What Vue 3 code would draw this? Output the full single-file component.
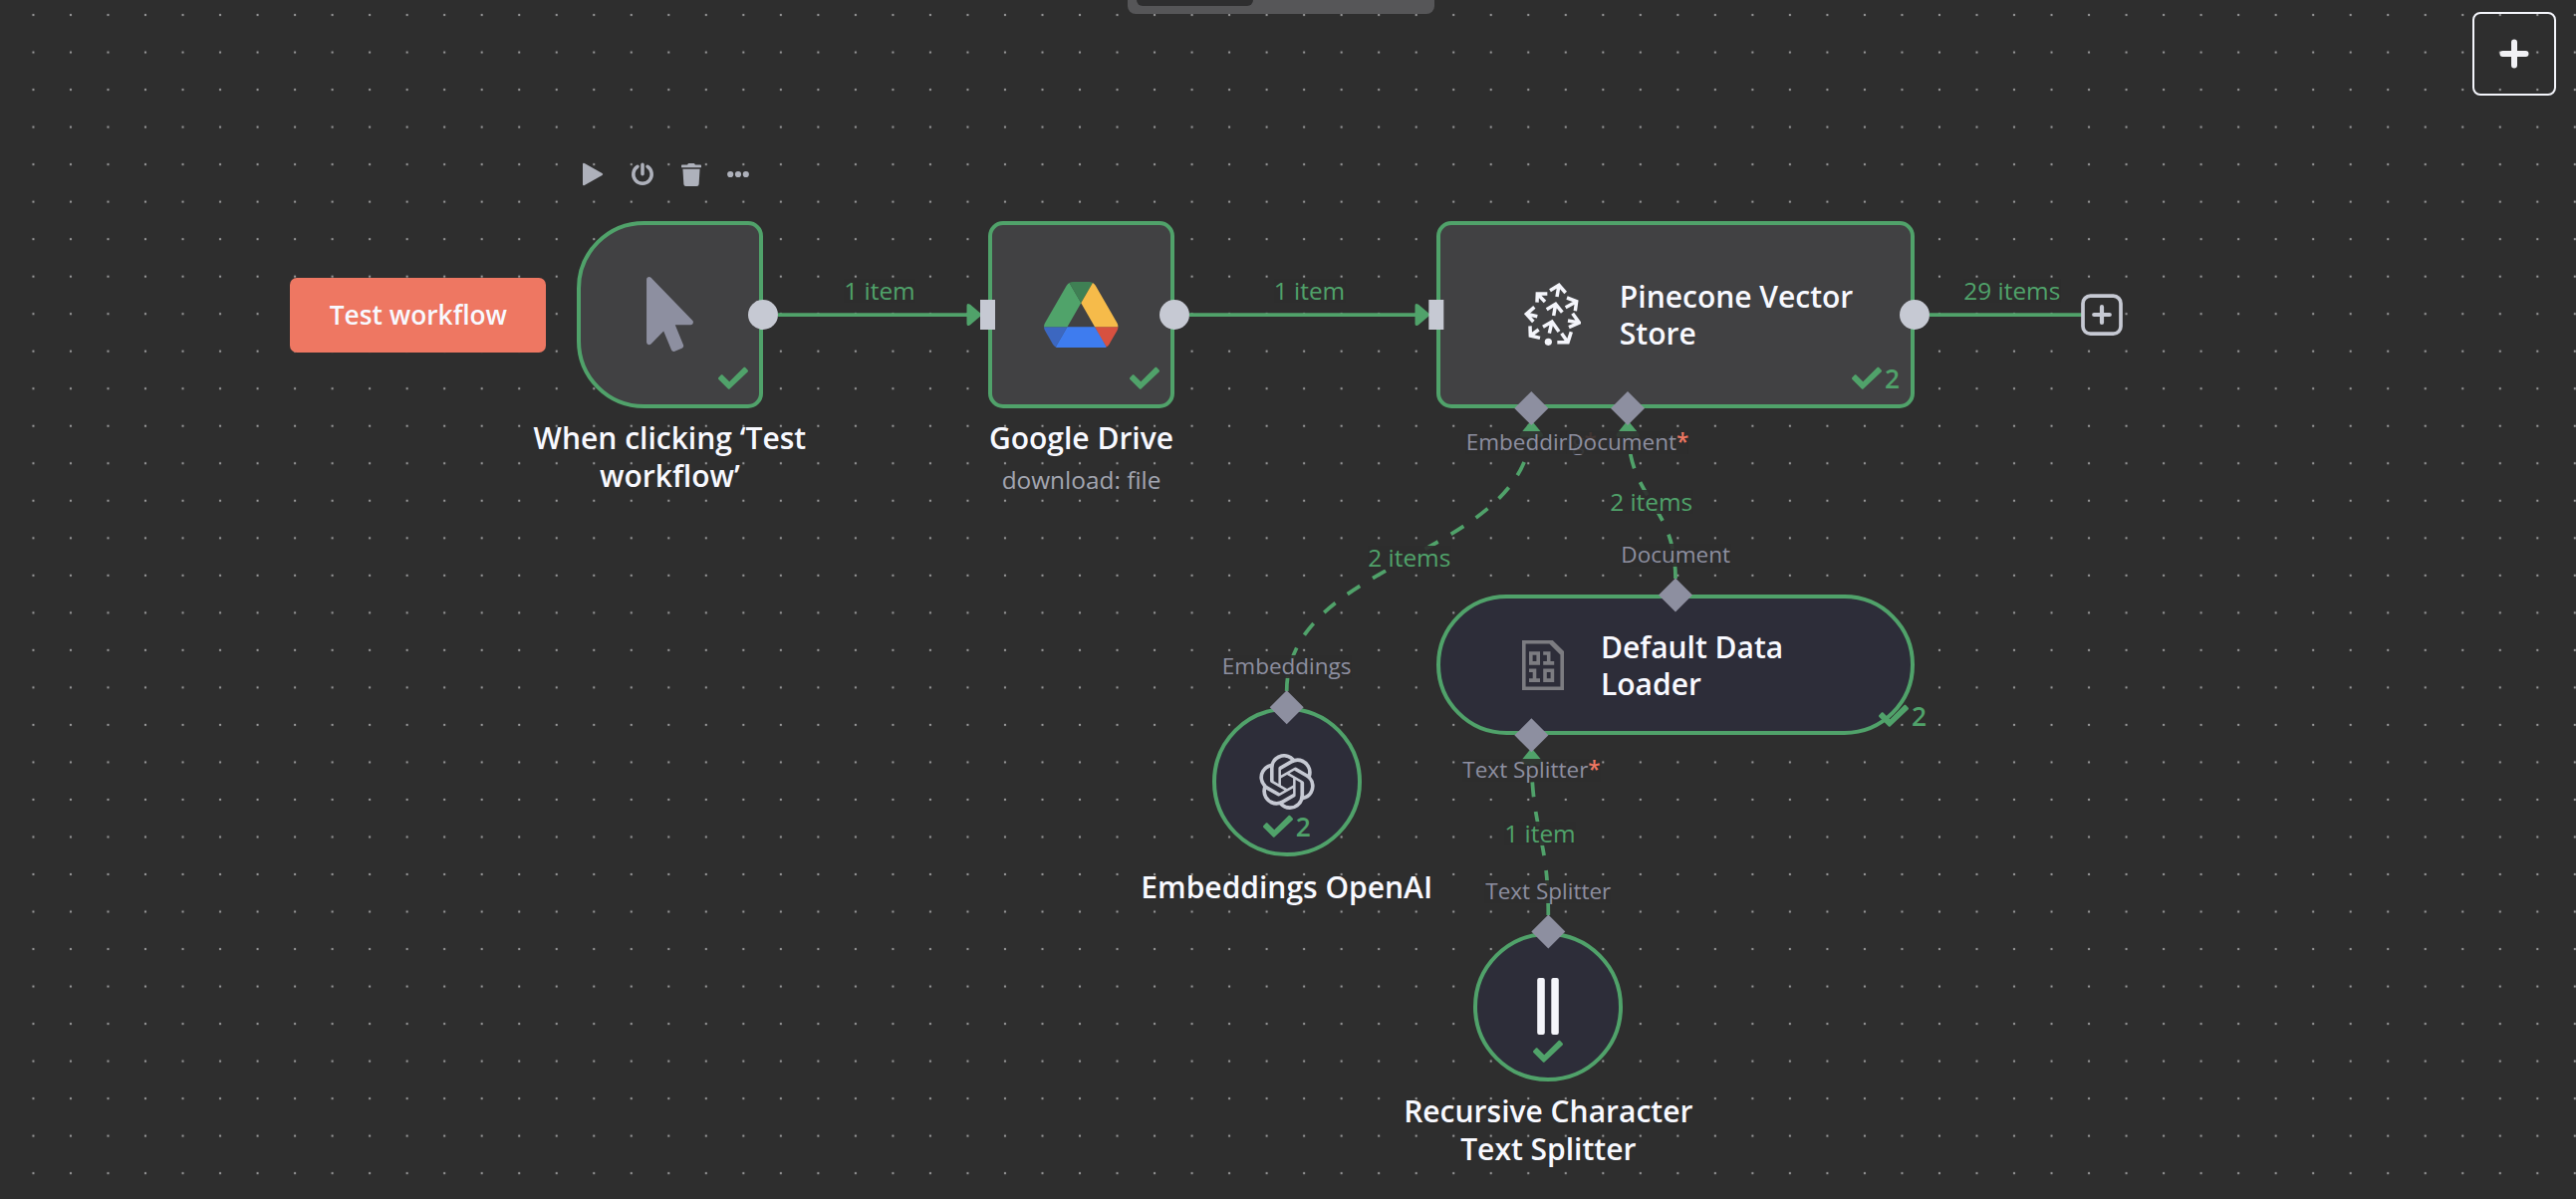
<script setup>
const CHECK =
  'M173.898 439.404l-166.4-166.4c-9.997-9.997-9.997-26.206 0-36.204l36.203-36.204c9.997-9.998 26.207-9.998 36.204 0L192 312.69 432.095 72.596c9.997-9.997 26.207-9.997 36.204 0l36.203 36.204c9.997 9.997 9.997 26.206 0 36.204L192 439.404z'

const nodes = [
  { id: 'trigger', kind: 'trigger', x: 578.6, y: 222, title: ['When clicking ‘Test', 'workflow’'] },
  { id: 'drive', kind: 'square', x: 991.7, y: 222, title: ['Google Drive'], sub: 'download: file' },
  { id: 'pinecone', kind: 'wide', x: 1442, y: 222, inner: ['Pinecone Vector', 'Store'], runs: 2 },
  { id: 'loader', kind: 'pill', x: 1442, y: 597.4, inner: ['Default Data', 'Loader'], runs: 2 },
  { id: 'openai', kind: 'round', x: 1216.7, y: 710.4, title: ['Embeddings OpenAI'], runs: 2 },
  { id: 'splitter', kind: 'round', x: 1479.3, y: 935.6, title: ['Recursive Character', 'Text Splitter'] },
]

const lines = [
  'M781 316H972',
  'M1194 316H1422',
  'M1937 316H2090',
]
const dashed = [
  'M1291.7 694C1291.7 560 1537.3 560 1537.3 427',
  'M1682 581C1682 504 1634 504 1634 427',
  'M1554.3 919C1554.3 837 1537.4 837 1537.4 755',
]
const arrows = [
  'M986 316L974 326.2Q970.5 328.5 970.5 325V307Q970.5 303.5 974 305.8Z',
  'M1436 316L1424 326.2Q1420.5 328.5 1420.5 325V307Q1420.5 303.5 1424 305.8Z',
  'M1537.3 422L1548.5 435.5Q1550 438.7 1547 438.7H1528Q1525 438.7 1526.3 435.5Z',
  'M1634 422L1645.2 435.5Q1646.7 438.7 1643.7 438.7H1624.7Q1621.7 438.7 1623 435.5Z',
  'M1537.4 751L1548.6 764.5Q1550 767.7 1547 767.7H1528Q1525 767.7 1526.4 764.5Z',
]

const labels = [
  { t: '1 item', x: 883, y: 280, k: 'items' },
  { t: '1 item', x: 1314.5, y: 280, k: 'items' },
  { t: '29 items', x: 2019.8, y: 280, k: 'items' },
  { t: '2 items', x: 1414.8, y: 548, k: 'items' },
  { t: '2 items', x: 1657.7, y: 492, k: 'items' },
  { t: '1 item', x: 1546, y: 825, k: 'items' },
  { t: 'Embedding', x: 1537.3, y: 433, k: 'port', req: true },
  { t: 'Document', x: 1634.3, y: 433, k: 'port', req: true },
  { t: 'Embeddings', x: 1291.7, y: 658, k: 'port' },
  { t: 'Document', x: 1682.2, y: 546, k: 'port' },
  { t: 'Text Splitter', x: 1537.5, y: 762, k: 'port', req: true },
  { t: 'Text Splitter', x: 1554.3, y: 884, k: 'port' },
]

const outputs = [766, 1179, 1922]
const inputs = [984, 1434.3]
const diamonds = [
  [1537.3, 410], [1634, 410], [1682, 597.6],
  [1537.4, 738.3], [1291.7, 710.3], [1554.3, 935.6],
]
</script>

<template>
  <main class="canvas">
    <svg class="layer" width="2586" height="1204">
      <defs>
        <pattern id="grid" x="14.7" y="-3.7" width="37.52" height="37.52" patternUnits="userSpaceOnUse">
          <circle cx="18.76" cy="18.76" r="1.15" fill="#9b9b9c" />
        </pattern>
      </defs>
      <rect width="2586" height="1204" fill="url(#grid)" />
      <g class="edges">
        <path v-for="d in lines" :key="d" :d="d" />
        <path v-for="d in dashed" :key="d" :d="d" stroke-dasharray="15 15" />
      </g>
      <path v-for="d in arrows" :key="d" :d="d" fill="#50a26a" />
    </svg>

    <div class="tabs"><span class="tab"></span></div>

    <button class="add" aria-label="Add node">
      <svg width="30" height="30" viewBox="0 0 30 30"><path d="M15 3.5V26.5M3.5 15H26.5" /></svg>
    </button>

    <div class="tools">
      <svg width="22" height="24" viewBox="0 0 22 24"><path d="M1 2Q1 0 2.8 1L20.5 11Q22 12 20.5 13L2.8 23Q1 24 1 22Z" fill="#aeb1bb" /></svg>
      <svg width="24" height="24" viewBox="0 0 24 24" fill="none" stroke="#aeb1bb" stroke-width="3.5" stroke-linecap="round"><path d="M7 4.3A9.2 9.2 0 1 0 17 4.3M12 2.2V11.8" /></svg>
      <svg width="20" height="23" viewBox="0 0 448 512" fill="#aeb1bb"><path d="M432 32H312l-9.4-18.7A24 24 0 0 0 281.1 0H166.8a23.72 23.72 0 0 0-21.4 13.3L136 32H16A16 16 0 0 0 0 48v32a16 16 0 0 0 16 16h416a16 16 0 0 0 16-16V48a16 16 0 0 0-16-16zM53.2 467a48 48 0 0 0 47.9 45h245.8a48 48 0 0 0 47.9-45L416 128H32z" /></svg>
      <svg width="22" height="8" viewBox="0 0 22 8" fill="#aeb1bb"><circle cx="3.2" cy="4" r="3.1" /><circle cx="11" cy="4" r="3.1" /><circle cx="18.8" cy="4" r="3.1" /></svg>
    </div>

    <button class="run">Test workflow</button>

    <section v-for="n in nodes" :key="n.id" class="node" :class="[n.kind, n.id]" :style="{ left: n.x + 'px', top: n.y + 'px' }">
      <div class="card">
        <svg v-if="n.id === 'trigger'" class="icon" width="47" height="75" viewBox="0 0 320 512">
          <path fill="#8d8fa0" d="M302.189 329.126H196.105l55.831 135.993c3.889 9.428-.555 19.999-9.444 23.999l-49.165 21.427c-9.165 4-19.443-.571-23.332-9.714l-53.053-129.136-86.664 89.138C18.729 472.71 0 463.554 0 447.977V18.299C0 1.899 19.921-6.096 30.277 5.443l284.412 292.542c11.472 11.179 3.007 31.141-12.5 31.141z" />
        </svg>
        <svg v-else-if="n.id === 'drive'" class="icon" width="74.5" height="66.5" viewBox="0 0 87.3 78">
          <path d="m6.6 66.85 3.85 6.65c.8 1.4 1.95 2.5 3.3 3.3l13.75-23.8h-27.5c0 1.55.4 3.1 1.2 4.5z" fill="#3c67c0" />
          <path d="m43.65 25-13.75-23.8c-1.35.8-2.5 1.9-3.3 3.3l-25.4 44a9.06 9.06 0 0 0 -1.2 4.5h27.5z" fill="#50a36a" />
          <path d="m73.55 76.8c1.35-.8 2.5-1.9 3.3-3.3l1.6-2.75 7.65-13.25c.8-1.4 1.2-2.95 1.2-4.5h-27.502l5.852 11.5z" fill="#d75140" />
          <path d="m43.65 25 13.75-23.8c-1.35-.8-2.9-1.2-4.5-1.2h-18.5c-1.6 0-3.15.45-4.5 1.2z" fill="#3f8054" />
          <path d="m59.8 53h-32.3l-13.75 23.8c1.35.8 2.9 1.2 4.5 1.2h50.8c1.6 0 3.15-.45 4.5-1.2z" fill="#3e7cef" />
          <path d="m73.4 26.5-12.7-22c-.8-1.4-1.95-2.5-3.3-3.3l-13.75 23.8 16.15 28h27.45c0-1.55-.4-3.1-1.2-4.5z" fill="#f6bb4a" />
        </svg>
        <svg v-else-if="n.id === 'pinecone'" class="icon" width="57.33" height="63.33" viewBox="329 254 172 190" fill="none" stroke="#f4f5fb" stroke-width="10.5">
          <path d="M407 277L434 261L454 284M434 261L428 296" />
          <path d="M399 287H369L368 313M369 287L392 311" />
          <path d="M360 327L336 348L357 371M336 348L369 355" />
          <path d="M347 384L348 413L377 420M348 413L373 395" />
          <path d="M429 433H461L471 402M461 433L442 406" />
          <path d="M475 346L495 374L464 388M495 374L461 368" />
          <path d="M458 299L487 310L483 339M487 310L454 328" />
          <path d="M397 334L424 318L444 343M424 318L418 353" />
          <path d="M386 387L413 371L434 401M413 371L405 406" />
          <circle cx="402" cy="432" r="10.8" fill="#f4f5fb" stroke="none" />
        </svg>
        <svg v-else-if="n.id === 'loader'" class="icon" width="42" height="50" viewBox="0 0 42 50" fill="none" stroke="#7c7c81" stroke-width="3.6">
          <path d="M1.8 1.8H30L40.2 11.8V48.2H1.8Z" />
          <path d="M29 2L40 13" stroke-width="4.5" />
          <path d="M8.8 13H16.2V22.9H8.8ZM23 30.2H30.4V40.1H23Z" />
          <path d="M21.2 13H26.7V24.7M21.2 22.9H32.2M7 30.2H12.5V41.9M7 40.1H18" />
        </svg>
        <svg v-else-if="n.id === 'openai'" class="icon" width="56" height="56" viewBox="0 0 24 24">
          <path fill="#c6c9d3" d="M22.2819 9.8211a5.9847 5.9847 0 0 0-.5157-4.9108 6.0462 6.0462 0 0 0-6.5098-2.9A6.0651 6.0651 0 0 0 4.9807 4.1818a5.9847 5.9847 0 0 0-3.9977 2.9 6.0462 6.0462 0 0 0 .7427 7.0966 5.98 5.98 0 0 0 .511 4.9107 6.051 6.051 0 0 0 6.5146 2.9001A5.9847 5.9847 0 0 0 13.2599 24a6.0557 6.0557 0 0 0 5.7718-4.2058 5.9894 5.9894 0 0 0 3.9977-2.9001 6.0557 6.0557 0 0 0-.7475-7.0729zm-9.022 12.6081a4.4755 4.4755 0 0 1-2.8764-1.0408l.1419-.0804 4.7783-2.7582a.7948.7948 0 0 0 .3927-.6813v-6.7369l2.02 1.1686a.071.071 0 0 1 .038.052v5.5826a4.504 4.504 0 0 1-4.4945 4.4944zm-9.6607-4.1254a4.4708 4.4708 0 0 1-.5346-3.0137l.142.0852 4.783 2.7582a.7712.7712 0 0 0 .7806 0l5.8428-3.3685v2.3324a.0804.0804 0 0 1-.0332.0615L9.74 19.9502a4.4992 4.4992 0 0 1-6.1408-1.6464zM2.3408 7.8956a4.485 4.485 0 0 1 2.3655-1.9728V11.6a.7664.7664 0 0 0 .3879.6765l5.8144 3.3543-2.0201 1.1685a.0757.0757 0 0 1-.071 0l-4.8303-2.7865A4.504 4.504 0 0 1 2.3408 7.872zm16.5963 3.8558L13.1038 8.364 15.1192 7.2a.0757.0757 0 0 1 .071 0l4.8303 2.7913a4.4944 4.4944 0 0 1-.6765 8.1042v-5.6772a.79.79 0 0 0-.407-.667zm2.0107-3.0231l-.142-.0852-4.7735-2.7818a.7759.7759 0 0 0-.7854 0L9.409 9.2297V6.8974a.0662.0662 0 0 1 .0284-.0615l4.8303-2.7866a4.4992 4.4992 0 0 1 6.6802 4.66zM8.3065 12.863l-2.02-1.1638a.0804.0804 0 0 1-.038-.0567V6.0742a4.4992 4.4992 0 0 1 7.3757-3.4537l-.142.0805L8.704 5.459a.7948.7948 0 0 0-.3927.6813zm1.0976-2.3654l2.602-1.4998 2.6069 1.4998v2.9994l-2.5974 1.4997-2.6067-1.4997Z" />
        </svg>
        <svg v-else class="icon" width="22" height="57" viewBox="0 0 22 57" fill="#f4f5fb">
          <rect x="0.2" width="7.6" height="57" rx="2" /><rect x="14.3" width="7.5" height="57" rx="2" />
        </svg>

        <h3 v-if="n.inner" class="title inner"><span v-for="l in n.inner" :key="l">{{ l }}</span></h3>

        <div class="status">
          <svg width="30" height="30" viewBox="0 0 512 512"><path :d="CHECK" fill="#50a26a" /></svg>
          <span v-if="n.runs">{{ n.runs }}</span>
        </div>
      </div>
      <h3 v-if="n.title" class="title"><span v-for="l in n.title" :key="l">{{ l }}</span></h3>
      <p v-if="n.sub" class="sub">{{ n.sub }}</p>
    </section>

    <svg class="layer" width="2586" height="1204">
      <g fill="#c6c9d3">
        <circle v-for="x in outputs" :key="x" :cx="x" cy="316" r="15" />
        <rect v-for="x in inputs" :key="x" :x="x" y="301" width="15" height="30" />
      </g>
      <path v-for="[x, y] in diamonds" :key="x + '-' + y" :d="`M${x} ${y - 17}l17 17l-17 17l-17-17z`" fill="#8d8fa0" />
      <rect x="2091" y="297.2" width="38" height="38" rx="7.5" fill="#2e2e2e" stroke="#c6c9d3" stroke-width="3.7" />
      <path d="M2110 308.2V324M2102.2 316H2117.8" stroke="#c6c9d3" stroke-width="4.2" stroke-linecap="round" />
    </svg>

    <div v-for="(l, i) in labels" :key="i" class="label" :class="l.k" :style="{ left: l.x + 'px', top: l.y + 'px' }">{{ l.t }}<b v-if="l.req">*</b></div>
  </main>
</template>

<style>
body {
  background: #2e2e2e;
}
</style>

<style scoped>
.canvas {
  position: relative;
  width: 2586px;
  height: 1204px;
  overflow: hidden;
  background: #2e2e2e;
  font-family: 'Open Sans', 'Noto Sans', sans-serif;
}
.layer {
  position: absolute;
  inset: 0;
  pointer-events: none;
}
.edges {
  fill: none;
  stroke: #50a26a;
  stroke-width: 3.75;
}
.tabs {
  position: absolute;
  left: 1132px;
  top: 0;
  width: 308px;
  height: 14px;
  padding-left: 9px;
  box-sizing: border-box;
  border-radius: 0 0 8px 8px;
  background: #565658;
}
.tab {
  display: block;
  width: 117px;
  height: 6px;
  border-radius: 0 0 6px 6px;
  background: #2e2e2f;
}
.add {
  position: absolute;
  left: 2482px;
  top: 12px;
  width: 84px;
  height: 84px;
  padding: 0;
  display: flex;
  align-items: center;
  justify-content: center;
  border: 2px solid #f4f5fb;
  border-radius: 8px;
  background: transparent;
}
.add path {
  fill: none;
  stroke: #f0f0f4;
  stroke-width: 6;
  stroke-linecap: round;
}
.tools {
  position: absolute;
  left: 584px;
  top: 163px;
  display: flex;
  align-items: center;
  gap: 26.8px;
}
.run {
  position: absolute;
  left: 291.4px;
  top: 278.6px;
  width: 257px;
  height: 75px;
  padding: 0;
  border: 0;
  border-radius: 7px;
  background: #ee7762;
  color: #f8f9ff;
  font: 600 26.3px/75px 'Open Sans', 'Noto Sans', sans-serif;
}
.node {
  position: absolute;
  display: flex;
  flex-direction: column;
  align-items: center;
  width: 187.6px;
}
.card {
  position: relative;
  display: flex;
  align-items: center;
  justify-content: center;
  box-sizing: border-box;
  width: 100%;
  height: 187.6px;
  border: 4px solid #50a26a;
  border-radius: 15px;
  background: #414143;
}
.icon {
  flex: none;
  display: block;
}
.trigger .card {
  border-radius: 67.5px 15px 15px 67.5px;
}
.wide,
.pill {
  width: 480px;
}
.wide .card,
.pill .card {
  justify-content: flex-start;
}
.pill .card {
  height: 141px;
  border-radius: 70.5px;
  background: #2d2d39;
}
.round {
  width: 150px;
}
.round .card {
  height: 150px;
  border-radius: 50%;
  background: #2d2d39;
}
.wide .icon {
  margin: 0 38.5px 0 84px;
}
.pill .icon {
  margin: 0 37px 0 82px;
}
.title {
  display: flex;
  flex-direction: column;
  align-items: center;
  margin: 11.6px 0 0;
  font-size: 30px;
  line-height: 37.5px;
  font-weight: 600;
  color: #f8f9ff;
  white-space: nowrap;
}
.title.inner {
  align-items: flex-start;
  margin: 1px 0 0;
}
.sub {
  margin: 8.4px 0 0;
  font-size: 24.4px;
  line-height: 30px;
  color: #a2a5b0;
  white-space: nowrap;
}
.status {
  position: absolute;
  right: 11px;
  bottom: 11px;
  display: flex;
  align-items: center;
  gap: 3px;
  height: 30px;
  color: #50a26a;
  font-size: 26.3px;
  line-height: 30px;
  font-weight: 600;
}
.pill .status {
  right: -16px;
  bottom: 0;
}
.round .status {
  right: auto;
  bottom: 11px;
}
.label {
  position: absolute;
  transform: translateX(-50%);
  white-space: nowrap;
  background: rgba(46, 46, 46, 0.9);
}
.items {
  font-size: 24.4px;
  line-height: 24.4px;
  color: #50a26a;
}
.port {
  font-size: 22.5px;
  line-height: 22.5px;
  color: #8d8fa0;
}
.port b {
  font-weight: 600;
  color: #ee7762;
}
</style>
